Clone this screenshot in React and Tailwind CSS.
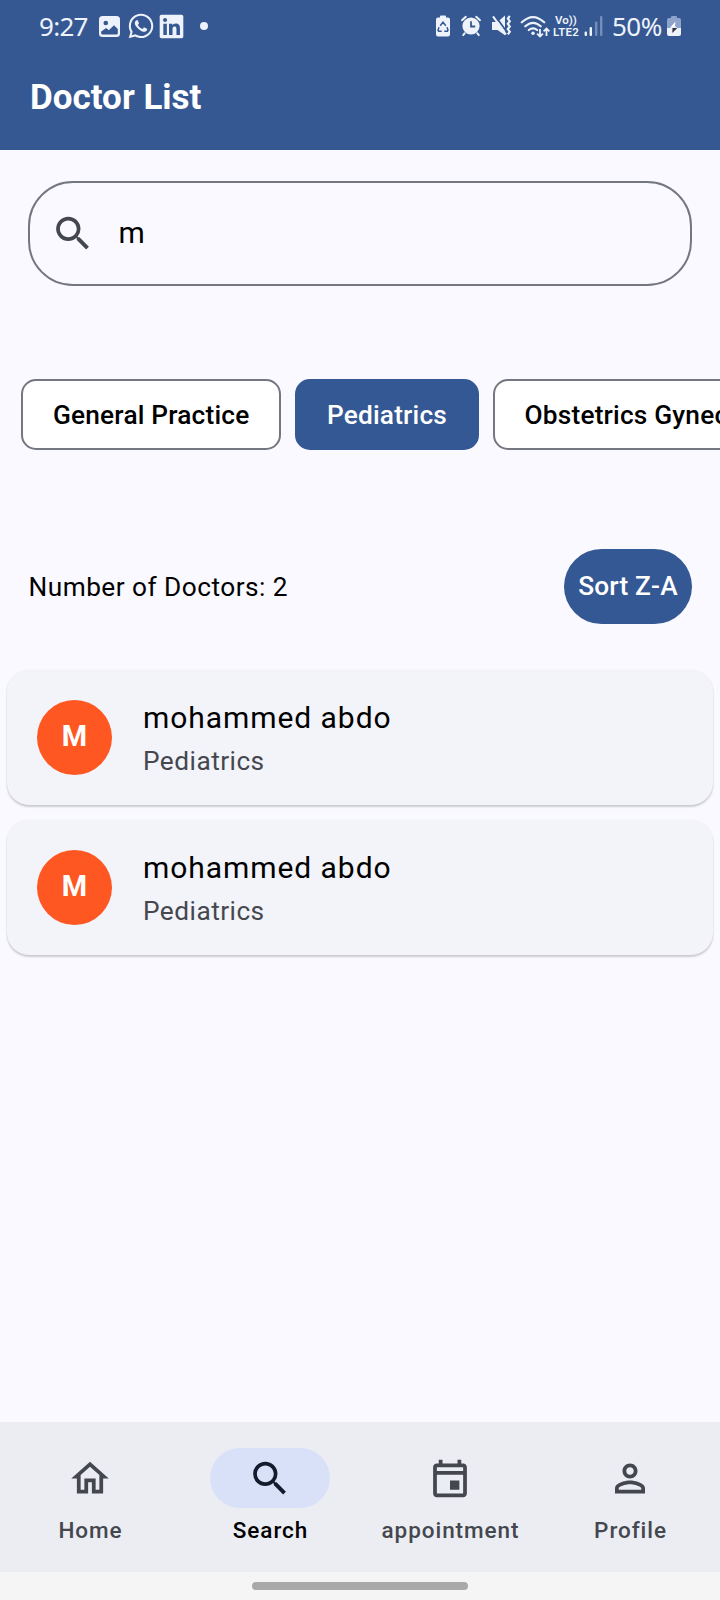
import React from "react";
import { FaWhatsapp, FaLinkedin } from "react-icons/fa";

const PATHS = {
  search:
    "M15.5 14h-.79l-.28-.27A6.471 6.471 0 0 0 16 9.5 6.5 6.5 0 1 0 9.5 16c1.61 0 3.09-.59 4.23-1.57l.27.28v.79l5 4.99L20.49 19l-4.99-5zm-6 0C7.01 14 5 11.99 5 9.5S7.01 5 9.5 5 14 7.01 14 9.5 11.99 14 9.5 14z",
  home: "M12 5.69l5 4.5V18h-2v-6H9v6H7v-7.81l5-4.5M12 3L2 12h3v8h6v-6h2v6h6v-8h3L12 3z",
  event:
    "M19 4h-1V2h-2v2H8V2H6v2H5c-1.11 0-2 .9-2 2v14c0 1.1.89 2 2 2h14c1.1 0 2-.9 2-2V6c0-1.1-.9-2-2-2zm0 16H5V10h14v10zm0-12H5V6h14v2zm-7 5h5v5h-5z",
  person:
    "M12 6c1.1 0 2 .9 2 2s-.9 2-2 2-2-.9-2-2 .9-2 2-2m0 9c2.7 0 5.8 1.29 6 2v1H6v-.99c.2-.72 3.3-2.01 6-2.01m0-11C9.79 4 8 5.79 8 8s1.79 4 4 4 4-1.79 4-4-1.79-4-4-4zm0 9c-2.67 0-8 1.34-8 4v3h16v-3c0-2.66-5.33-4-8-4z",
};

function Icon({ name, className = "" }) {
  return (
    <svg viewBox="0 0 24 24" className={`h-[45px] w-[46px] shrink-0 fill-current ${className}`}>
      <path d={PATHS[name]} />
    </svg>
  );
}

function StatusBar() {
  return (
    <div className="flex h-[52px] items-center pl-[39px] pr-[38px] font-['Noto_Sans',sans-serif] text-[#eef2fb]">
      <span className="w-[49px] whitespace-nowrap text-[26px] leading-[52px] tracking-[-0.7px]">9:27</span>
      {/* gallery */}
      <svg viewBox="0 0 21 21" className="ml-[11px] h-[21px] w-[21px]">
        <rect width="21" height="21" rx="3.5" fill="currentColor" />
        <circle cx="6.8" cy="7" r="2.3" fill="#355892" />
        <path d="M2.2 15.6 7.2 12l2.6 2.2 5.2-5 3.8 3.7v4.4q0 1.2-1.2 1.2H3.4q-1.2 0-1.2-1.2z" fill="#355892" />
      </svg>
      <FaWhatsapp className="ml-[7px] size-[28px]" />
      <FaLinkedin className="ml-[3px] size-[27px]" />
      <span className="ml-[15px] size-[8px] rounded-full bg-current" />
      <div className="ml-auto flex items-center">
        {/* battery protection */}
        <svg viewBox="435 14 16 24" className="h-[24px] w-[16px]">
          <path d="M440 17.5v-1q0-1 1-1h4q1 0 1 1v1h2q2 0 2 2v15q0 2-2 2h-10q-2 0-2-2v-15q0-2 2-2z" fill="currentColor" />
          <path d="m440.2 25.8 2.8-3.6 2.8 3.6M447 27.3l1 2.8-.7 1.1h-3M441.7 31.2h-3l-.7-1.1 1-2.8" fill="none" stroke="#355892" strokeWidth="1.5" />
        </svg>
        {/* alarm */}
        <svg viewBox="460 14 22 24" className="ml-[9px] h-[24px] w-[22px]">
          <circle cx="471" cy="26" r="8.6" fill="currentColor" />
          <path d="m462 20.2 3.8-3.4M480 20.2l-3.8-3.4M464.8 33.2l-1.6 1.9M477.2 33.2l1.6 1.9" stroke="currentColor" strokeWidth="2" strokeLinecap="round" />
          <path d="M471 21.2v5.3h4.2" fill="none" stroke="#355892" strokeWidth="1.8" />
        </svg>
        {/* vibrate */}
        <svg viewBox="490 14 22 24" className="ml-[8px] h-[24px] w-[22px]">
          <path d="M492 22h5.5l7.5-6.4v19.6L497.5 30H492z" fill="currentColor" />
          <path d="m494.6 15 12.6 17.6" stroke="#355892" strokeWidth="1.8" />
          <path d="m493 16.3 13 18.2" stroke="currentColor" strokeWidth="2" />
          <path d="m509.8 16-2 2.5 2 2.7-2 2.6 2 2.7-2 2.6 2 2.7-2 2.6" fill="none" stroke="currentColor" strokeWidth="2.2" />
        </svg>
        {/* wifi */}
        <svg viewBox="520 13 30 25" className="ml-[8px] h-[25px] w-[30px]">
          <path d="M521.8 21.3q11.2-10.5 22.4 0M525.3 25.3q7.7-7 15.4 0M528.8 29q4.2-3.4 8.4 0" fill="none" stroke="currentColor" strokeWidth="2.2" strokeLinecap="round" />
          <circle cx="533" cy="32.3" r="1.7" fill="currentColor" />
          <path d="M540 28v7.5m-2.9-2.8 2.9 2.9 2.9-2.9M546.5 35v-7.5m-2.9 2.8 2.9-2.9 2.9 2.9" fill="none" stroke="currentColor" strokeWidth="1.8" />
        </svg>
        <div className="ml-[2px] flex w-[28px] flex-col items-center whitespace-nowrap font-['Roboto',sans-serif] text-[11.5px] font-semibold leading-[12px]">
          <span>Vo))</span>
          <span className="tracking-[0.2px]">LTE2</span>
        </div>
        {/* signal */}
        <svg viewBox="584 15 20 22" className="ml-[4px] h-[22px] w-[20px]" fill="currentColor">
          <rect x="584.6" y="31.5" width="2.4" height="4.5" rx="1" />
          <rect x="589.6" y="27" width="2.4" height="9" rx="1" />
          <rect x="595" y="21.5" width="2.4" height="14.5" rx="1" opacity=".35" />
          <rect x="600" y="16" width="2.4" height="20" rx="1" opacity=".35" />
        </svg>
        <span className="ml-[8px] w-[52px] whitespace-nowrap text-[26px] leading-[52px] tracking-[-0.5px]">50%</span>
        {/* charging battery */}
        <svg viewBox="667 15 15 22" className="ml-[3px] h-[22px] w-[15px]">
          <path d="M671 18v-1q0-1 1-1h4q1 0 1 1v1h2q2 0 2 2v9h-14v-9q0-2 2-2z" fill="#8da3cb" />
          <path d="M667 28h14v6q0 2-2 2h-10q-2 0-2-2z" fill="currentColor" />
          <path d="m675.5 21.5-5.5 6.3h7.4l-2.5-1.6z" fill="#fff" />
          <path d="M672.5 28h4.8l-5 5z" fill="#30343c" />
        </svg>
      </div>
    </div>
  );
}

function Chip({ active, children }) {
  return (
    <div
      className={`flex h-[71px] shrink-0 items-center whitespace-nowrap rounded-[15px] border-2 pt-[2px] text-[26.25px] font-medium tracking-[0.19px] ${
        active ? "border-[#345894] bg-[#345894] px-[29.5px] text-white" : "border-[#74777f] bg-white px-[30px] text-black"
      }`}
    >
      {children}
    </div>
  );
}

function DoctorCard({ name, specialty }) {
  return (
    <div className="flex h-[135px] items-center gap-[31px] rounded-[22px] bg-[#f3f3fa] px-[30px] shadow-[0_2px_2px_rgba(0,0,0,0.18),0_0_2px_rgba(0,0,0,0.06)]">
      <div className="flex size-[75px] items-center justify-center rounded-full bg-[#ff5722] pb-px text-[29px] font-bold text-white">
        {name[0].toUpperCase()}
      </div>
      <div className="flex flex-col pt-[3px]">
        <span className="text-[30px] leading-[44px] tracking-[0.94px] text-black">{name}</span>
        <span className="text-[26.25px] leading-[42px] tracking-[0.47px] text-[#44474e]">{specialty}</span>
      </div>
    </div>
  );
}

function NavItem({ icon, label, active }) {
  return (
    <div className={`flex flex-1 flex-col items-center pt-[26px] ${active ? "text-black" : "text-[#44474e]"}`}>
      <div className={`flex h-[60px] w-[120px] items-center justify-center rounded-full ${active ? "bg-[#d9e1f9]" : ""}`}>
        <Icon name={icon} className={active ? "text-[#121c2c]" : ""} />
      </div>
      <span className="mt-[7px] pl-px text-[22.5px] font-medium leading-[30px] tracking-[0.94px]">{label}</span>
    </div>
  );
}

export default function App() {
  return (
    <div className="flex h-[1600px] w-[720px] flex-col overflow-hidden bg-[#faf9ff] font-['Roboto',sans-serif]">
      <header className="h-[150px] bg-[#355892]">
        <StatusBar />
        <h1 className="pl-[30px] text-[35px] font-bold leading-[92px] text-white">Doctor List</h1>
      </header>

      <main className="flex flex-1 flex-col">
        <div className="mx-[28px] mt-[31px] flex h-[105px] items-center rounded-[45px] border-2 border-[#74777f] pl-[20px]">
          <Icon name="search" className="text-[#44474e]" />
          <span className="ml-[22.5px] pb-[2px] text-[30px] tracking-[0.94px] text-black">m</span>
        </div>

        <div className="mt-[93px] flex gap-[14px] overflow-hidden pl-[21px]">
          <Chip>General Practice</Chip>
          <Chip active>Pediatrics</Chip>
          <Chip>Obstetrics Gynecology</Chip>
        </div>

        <div className="mt-[99px] flex items-center justify-between pl-[28.5px] pr-[28px]">
          <span className="pt-[2px] text-[26.25px] tracking-[0.47px] text-black">Number of Doctors: 2</span>
          <button className="h-[75px] w-[128px] whitespace-nowrap rounded-full bg-[#345894] text-[26.25px] font-medium tracking-[0.19px] text-white">
            Sort Z-A
          </button>
        </div>

        <div className="mt-[46px] flex flex-col gap-[15px] px-[7px]">
          <DoctorCard name="mohammed abdo" specialty="Pediatrics" />
          <DoctorCard name="mohammed abdo" specialty="Pediatrics" />
        </div>
      </main>

      <nav className="flex h-[150px] bg-[#ecedf3]">
        <NavItem icon="home" label="Home" />
        <NavItem icon="search" label="Search" active />
        <NavItem icon="event" label="appointment" />
        <NavItem icon="person" label="Profile" />
      </nav>
      <div className="flex h-[28px] justify-center bg-[#f5f5f5] pt-[10px]">
        <div className="h-[8px] w-[216px] rounded-full bg-[#a9a9a9]" />
      </div>
    </div>
  );
}
